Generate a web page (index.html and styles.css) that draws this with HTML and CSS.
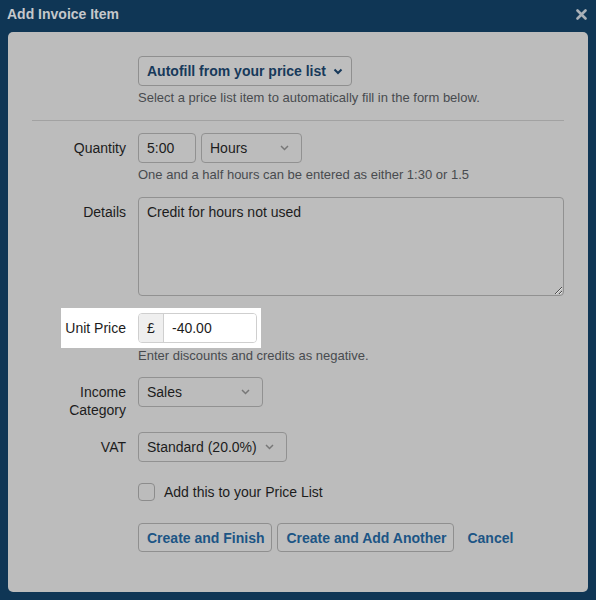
FILE: index.html
```html
<!DOCTYPE html>
<html lang="en">
<head>
    <meta charset="UTF-8">
    <meta name="viewport" content="width=device-width, initial-scale=1.0">
    <title>Add Invoice Item</title>
    <link rel="stylesheet" href="styles.css">
</head>
<body>
    <div class="modal">
        <div class="modal-header">
            <h1>Add Invoice Item</h1>
            <svg class="close" width="11" height="11" viewBox="0 0 11 11"><path d="M1.5,1.5 L9.5,9.5 M9.5,1.5 L1.5,9.5" stroke="#a9b0b7" stroke-width="2.6" stroke-linecap="round"/></svg>
        </div>

        <div class="modal-body">
            <!-- Autofill section -->
            <div class="autofill">
                <button class="btn btn-autofill">Autofill from your price list
                    <svg width="10" height="7" viewBox="0 0 10 7"><polyline points="1.5,1.5 5,5 8.5,1.5" fill="none" stroke="#17395a" stroke-width="2"/></svg>
                </button>
                <p class="help">Select a price list item to automatically fill in the form below.</p>
            </div>

            <hr class="divider">

            <div class="form-row">
                <label>Quantity</label>
                <div class="field">
                    <div class="inline">
                        <input class="input qty" type="text" value="5:00">
                        <div class="select hours">Hours
                            <svg width="9" height="6" viewBox="0 0 9 6"><polyline points="1,1 4.5,4.5 8,1" fill="none" stroke="#777" stroke-width="1.5"/></svg>
                        </div>
                    </div>
                    <p class="help">One and a half hours can be entered as either 1:30 or 1.5</p>
                </div>
            </div>

            <div class="form-row">
                <label>Details</label>
                <div class="field">
                    <textarea class="input details">Credit for hours not used</textarea>
                </div>
            </div>

            <!-- Highlighted row -->
            <div class="spot-row">
                <div class="spot">
                    <label>Unit Price</label>
                    <div class="input-group">
                        <span class="addon">&pound;</span>
                        <input type="text" value="-40.00">
                    </div>
                </div>
            </div>
            <p class="help help-spot">Enter discounts and credits as negative.</p>

            <div class="form-row">
                <label>Income<br>Category</label>
                <div class="field">
                    <div class="select sales">Sales
                        <svg width="9" height="6" viewBox="0 0 9 6"><polyline points="1,1 4.5,4.5 8,1" fill="none" stroke="#777" stroke-width="1.5"/></svg>
                    </div>
                </div>
            </div>

            <div class="form-row">
                <label>VAT</label>
                <div class="field">
                    <div class="select vat">Standard (20.0%)
                        <svg width="9" height="6" viewBox="0 0 9 6"><polyline points="1,1 4.5,4.5 8,1" fill="none" stroke="#777" stroke-width="1.5"/></svg>
                    </div>
                </div>
            </div>

            <div class="check-row">
                <span class="checkbox"></span>
                <span>Add this to your Price List</span>
            </div>

            <div class="actions">
                <button class="btn">Create and Finish</button>
                <button class="btn">Create and Add Another</button>
                <a class="cancel" href="#">Cancel</a>
            </div>
        </div>
    </div>
</body>
</html>
```

FILE: styles.css
```css
* {
    margin: 0;
    padding: 0;
    box-sizing: border-box;
}
body {
    background-color: #0f3655;
    font-family: "Liberation Sans", Arial, sans-serif;
    font-size: 14px;
    color: #1c1c1c;
    width: 596px;
    height: 600px;
    overflow: hidden;
}
.modal-header {
    height: 32px;
    display: flex;
    align-items: center;
    justify-content: space-between;
    padding: 0 9px 4px 7px;
}
.modal-header h1 {
    font-size: 14px;
    font-weight: bold;
    color: #c5c8cb;
}
.modal-body {
    margin: 0 8px;
    height: 560px;
    background-color: #bcbcbc;
    border-radius: 5px;
    padding: 24px 24px 0 24px;
}
.autofill {
    padding-left: 106px;
}
.btn {
    height: 30px;
    padding: 0 8px;
    font-family: inherit;
    font-size: 14px;
    font-weight: bold;
    color: #1c5585;
    background-color: #bebebe;
    border: 1px solid #8f8f8f;
    border-radius: 4px;
}
.btn-autofill {
    color: #17395a;
    display: inline-flex;
    align-items: center;
    gap: 7px;
}
.help {
    font-size: 13px;
    line-height: 18px;
    color: #484b4f;
    margin-top: 3px;
}
.divider {
    border: none;
    border-top: 1px solid #a2a2a2;
    margin: 13px 0 12px;
}
.form-row {
    display: flex;
    gap: 12px;
    margin-bottom: 13px;
}
.form-row label {
    width: 94px;
    flex-shrink: 0;
    text-align: right;
    padding-top: 6px;
    line-height: 18px;
}
.field {
    flex: 1;
}
.inline {
    display: flex;
    gap: 5px;
}
.input {
    height: 30px;
    padding: 0 8px;
    font-family: inherit;
    font-size: 14px;
    color: #1c1c1c;
    background-color: #bdbdbd;
    border: 1px solid #919191;
    border-radius: 4px;
}
.qty {
    width: 58px;
}
.details {
    display: block;
    width: 100%;
    height: 99px;
    padding: 5px 8px;
    line-height: 18px;
    resize: vertical;
}
.select {
    height: 30px;
    display: flex;
    align-items: center;
    justify-content: space-between;
    padding: 0 12px 0 8px;
    border: 1px solid #919191;
    border-radius: 4px;
}
.hours {
    width: 101px;
}
.sales {
    width: 125px;
}
.vat {
    width: 149px;
}
.spot-row {
    display: flex;
    margin-top: -1px;
}
.spot {
    display: flex;
    align-items: center;
    gap: 12px;
    margin-left: 29px;
    padding: 5px 4px 5px 0;
    background-color: #fff;
}
.spot label {
    width: 65px;
    text-align: right;
}
.input-group {
    display: flex;
    height: 30px;
    width: 119px;
    border: 1px solid #cfcfcf;
    border-radius: 4px;
    overflow: hidden;
}
.addon {
    width: 25px;
    display: flex;
    align-items: center;
    justify-content: center;
    background-color: #efefef;
    border-right: 1px solid #cfcfcf;
}
.input-group input {
    flex: 1;
    width: 0;
    border: none;
    padding: 0 8px;
    font-family: inherit;
    font-size: 14px;
    color: #1c1c1c;
}
.help-spot {
    margin: -1px 0 12px 106px;
}
.check-row {
    display: flex;
    align-items: center;
    gap: 9px;
    margin: 21px 0 0 106px;
}
.checkbox {
    width: 17px;
    height: 18px;
    border: 1px solid #8c8c8c;
    border-radius: 4px;
}
.actions {
    display: flex;
    align-items: center;
    gap: 5px;
    margin: 22px 0 0 106px;
}
.actions .btn {
    height: 29px;
    padding: 0 7px 0 8px;
}
.cancel {
    margin-left: 8px;
    font-weight: bold;
    color: #1c5585;
    text-decoration: none;
}
```
